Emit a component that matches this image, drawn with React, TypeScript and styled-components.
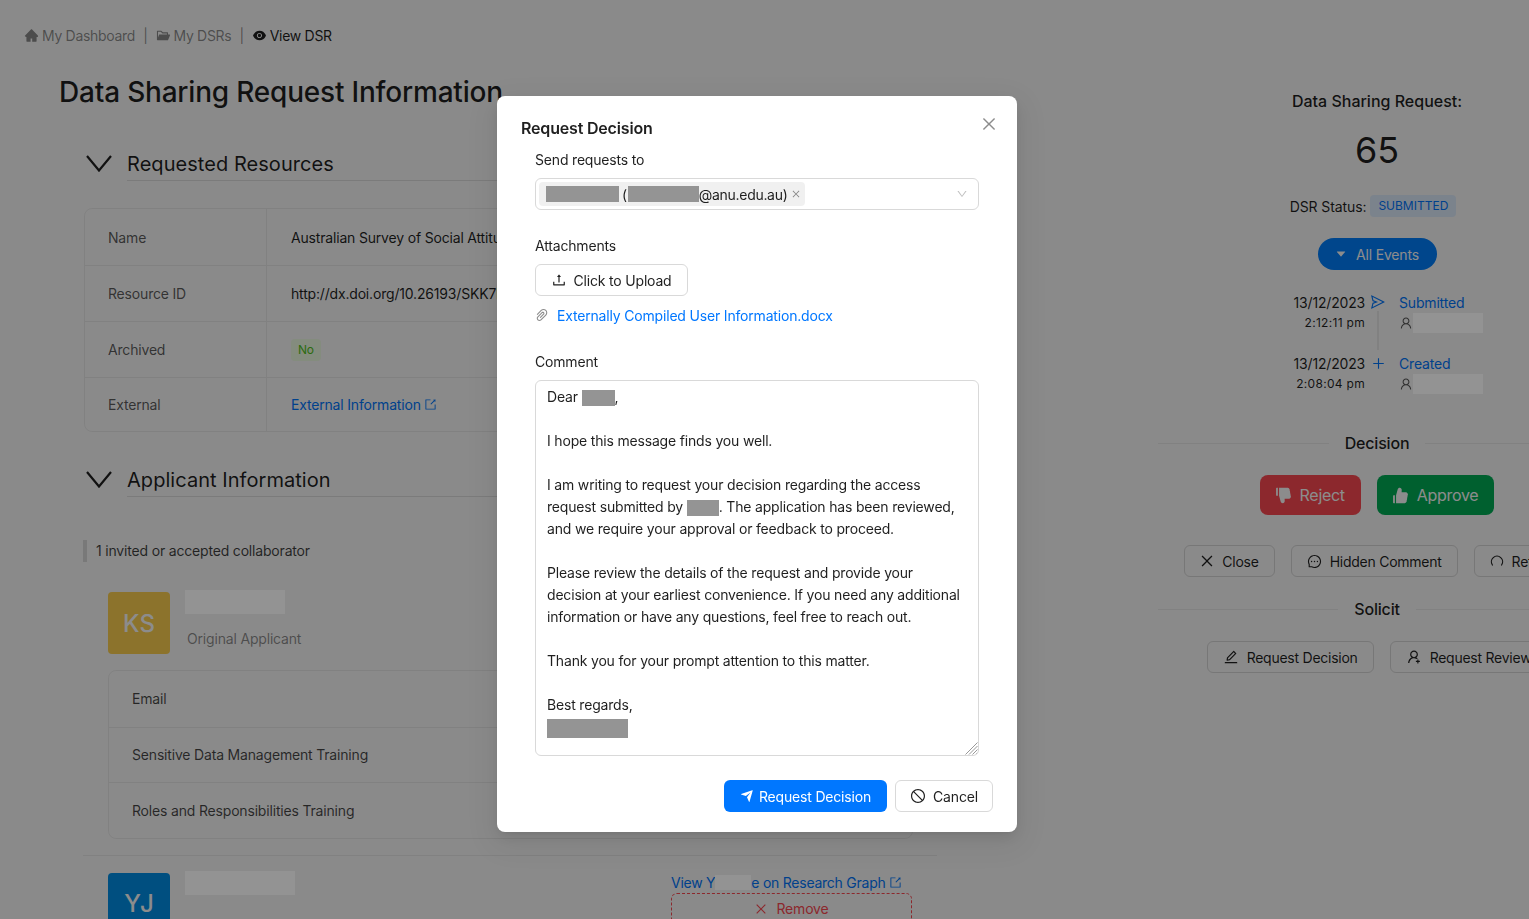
import React from 'react';
import styled, {createGlobalStyle} from 'styled-components';
import {
    AiFillCaretDown,
    AiFillDislike,
    AiFillEye,
    AiFillFolderOpen,
    AiFillHome,
    AiFillLike,
    AiOutlineClose,
    AiOutlineDown,
    AiOutlineEdit,
    AiOutlineExport,
    AiOutlineMessage,
    AiOutlinePaperClip,
    AiOutlinePlus,
    AiOutlineSend,
    AiOutlineStop,
    AiOutlineUpload,
    AiOutlineUser,
    AiOutlineUserAdd
} from 'react-icons/ai';
import {RiSendPlaneFill} from 'react-icons/ri';

const GlobalStyle = createGlobalStyle`
  html, body {
    margin: 0;
    height: 919px;
    overflow: hidden;
    background: #fbfbfb;
    font-family: Inter, "Liberation Sans", sans-serif;
    font-size: 14px;
    letter-spacing: -0.18px;
    color: rgba(0, 0, 0, 0.88);
  }
  * { box-sizing: border-box; }
`;

const resourceRows = [
    {label: 'Name', value: 'Australian Survey of Social Attitudes, 2022'},
    {label: 'Resource ID', value: 'http://dx.doi.org/10.26193/SKK7PT'},
    {label: 'Archived', tag: 'No'},
    {label: 'External', link: 'External Information'}
];

const trainingRows = ['Email', 'Sensitive Data Management Training', 'Roles and Responsibilities Training'];

const ReturnIcon = () => (
    <svg width="14" height="14" viewBox="0 0 14 14" fill="none" stroke="currentColor" strokeWidth="1.2" strokeLinecap="round">
        <path d="M2.4 11 A5.6 5.6 0 1 1 11.6 11"/>
    </svg>
);

const SectionChevron = () => (
    <ChevronSvg width="26" height="17" viewBox="0 0 26 17" fill="none" stroke="currentColor" strokeWidth="2.2">
        <polyline points="1,1 13,15.5 25,1"/>
    </ChevronSvg>
);

const ResizeGrip = () => (
    <GripSvg width="13" height="13" viewBox="0 0 13 13" stroke="#8c8c8c" strokeWidth="0.9">
        <line x1="0.5" y1="12.5" x2="12.5" y2="0.5"/>
        <line x1="4" y1="12.5" x2="12.5" y2="4"/>
        <line x1="7.5" y1="12.5" x2="12.5" y2="7.5"/>
        <line x1="10.5" y1="12.5" x2="12.5" y2="10.5"/>
    </GripSvg>
);

const App: React.FC = () => (
    <>
        <GlobalStyle/>
        <Page>
            <Breadcrumb>
                <Crumb><AiFillHome size={15}/>My Dashboard</Crumb>
                <Sep>|</Sep>
                <Crumb><AiFillFolderOpen size={15}/>My DSRs</Crumb>
                <Sep>|</Sep>
                <Crumb $current><AiFillEye size={15}/>View DSR</Crumb>
            </Breadcrumb>

            <Columns>
                <LeftColumn>
                    <PageTitle>Data Sharing Request Information</PageTitle>

                    <Section>
                        <SectionHead>
                            <SectionChevron/>
                            <SectionTitle>Requested Resources</SectionTitle>
                        </SectionHead>
                        <Table>
                            {resourceRows.map((row) => (
                                <TableRow key={row.label}>
                                    <LabelCell>{row.label}</LabelCell>
                                    <ValueCell>
                                        {row.value}
                                        {row.tag && <GreenTag>{row.tag}</GreenTag>}
                                        {row.link && <Link>{row.link} <AiOutlineExport size={13}/></Link>}
                                    </ValueCell>
                                </TableRow>
                            ))}
                        </Table>
                    </Section>

                    <Section $second>
                        <SectionHead>
                            <SectionChevron/>
                            <SectionTitle>Applicant Information</SectionTitle>
                        </SectionHead>
                        <Quote>1 invited or accepted collaborator</Quote>

                        <Person>
                            <Avatar $color="#ffd150">KS</Avatar>
                            <PersonText>
                                <NameBlock $width={100}/>
                                <Muted>Original Applicant</Muted>
                            </PersonText>
                        </Person>
                        <InnerTable>
                            {trainingRows.map((label) => (
                                <InnerRow key={label}>{label}</InnerRow>
                            ))}
                        </InnerTable>
                        <Divider/>
                        <Person $last>
                            <Avatar $color="#0091e9">YJ</Avatar>
                            <PersonText>
                                <NameBlock $width={110}/>
                            </PersonText>
                            <PersonActions>
                                <GraphLink>
                                    View Y<LinkBlock/>e on Research Graph <AiOutlineExport size={13}/>
                                </GraphLink>
                                <RemoveButton><AiOutlineClose size={14}/>Remove</RemoveButton>
                            </PersonActions>
                        </Person>
                    </Section>
                </LeftColumn>

                <RightColumn>
                    <SideTitle>Data Sharing Request:</SideTitle>
                    <BigNumber>65</BigNumber>
                    <StatusRow>DSR Status:<StatusTag>SUBMITTED</StatusTag></StatusRow>
                    <EventsButton><AiFillCaretDown size={12}/>All Events</EventsButton>

                    <Timeline>
                        <TimelineItem>
                            <TimeCell>
                                <DateText>13/12/2023</DateText>
                                <TimeText>2:12:11 pm</TimeText>
                            </TimeCell>
                            <IconCell>
                                <TimelineIcon><AiOutlineSend size={16}/></TimelineIcon>
                                <Line/>
                            </IconCell>
                            <EventCell>
                                <EventName>Submitted</EventName>
                                <EventUser><AiOutlineUser size={14}/><UserBlock/></EventUser>
                            </EventCell>
                        </TimelineItem>
                        <TimelineItem>
                            <TimeCell>
                                <DateText>13/12/2023</DateText>
                                <TimeText>2:08:04 pm</TimeText>
                            </TimeCell>
                            <IconCell>
                                <TimelineIcon><AiOutlinePlus size={15}/></TimelineIcon>
                            </IconCell>
                            <EventCell>
                                <EventName>Created</EventName>
                                <EventUser><AiOutlineUser size={14}/><UserBlock/></EventUser>
                            </EventCell>
                        </TimelineItem>
                    </Timeline>

                    <SideDivider>Decision</SideDivider>
                    <DecisionRow>
                        <BigButton $color="#ff4952"><AiFillDislike size={19}/>Reject</BigButton>
                        <BigButton $color="#00af57"><AiFillLike size={19}/>Approve</BigButton>
                    </DecisionRow>
                    <ActionRow>
                        <GhostButton><CloseGlyph size={16}/>Close</GhostButton>
                        <GhostButton><AiOutlineMessage size={15}/>Hidden Comment</GhostButton>
                        <GhostButton><ReturnIcon/>Return</GhostButton>
                    </ActionRow>
                    <SolicitDivider>Solicit</SolicitDivider>
                    <ActionRow $tight>
                        <GhostButton><AiOutlineEdit size={16}/>Request Decision</GhostButton>
                        <GhostButton><AiOutlineUserAdd size={16}/>Request Review</GhostButton>
                    </ActionRow>
                </RightColumn>
            </Columns>
        </Page>

        <Mask/>
        <Modal>
            <CloseButton><AiOutlineClose size={18}/></CloseButton>
            <ModalTitle>Request Decision</ModalTitle>
            <Form>
                <FieldLabel>Send requests to</FieldLabel>
                <SelectBox>
                    <Chip>
                        <Redact $width={73}/>
                        <ChipText>(</ChipText>
                        <Redact $width={71}/>
                        @anu.edu.au)
                        <AiOutlineClose size={10}/>
                    </Chip>
                    <AiOutlineDown size={12}/>
                </SelectBox>

                <FieldLabel $gap>Attachments</FieldLabel>
                <UploadButton><AiOutlineUpload size={16}/>Click to Upload</UploadButton>
                <AttachmentRow>
                    <AiOutlinePaperClip size={16}/>
                    <ModalLink>Externally Compiled User Information.docx</ModalLink>
                </AttachmentRow>

                <FieldLabel $gap>Comment</FieldLabel>
                <CommentBox>
                    <p>Dear <Redact $width={33}/>,</p>
                    <p>&nbsp;</p>
                    <p>I hope this message finds you well.</p>
                    <p>&nbsp;</p>
                    <p>I am writing to request your decision regarding the access</p>
                    <p>request submitted by <Redact $width={32}/>. The application has been reviewed,</p>
                    <p>and we require your approval or feedback to proceed.</p>
                    <p>&nbsp;</p>
                    <p>Please review the details of the request and provide your</p>
                    <p>decision at your earliest convenience. If you need any additional</p>
                    <p>information or have any questions, feel free to reach out.</p>
                    <p>&nbsp;</p>
                    <p>Thank you for your prompt attention to this matter.</p>
                    <p>&nbsp;</p>
                    <p>Best regards,</p>
                    <p><Redact $width={81} $tall/></p>
                    <ResizeGrip/>
                </CommentBox>
            </Form>
            <ModalFooter>
                <PrimaryButton><RiSendPlaneFill size={14}/>Request Decision</PrimaryButton>
                <CancelButton><AiOutlineStop size={16}/>Cancel</CancelButton>
            </ModalFooter>
        </Modal>
    </>
);

export default App;

// page

const Page = styled.div`
  width: 1529px;
  height: 919px;
  overflow: hidden;
  padding: 24px 0 0 24px;
`;

const Breadcrumb = styled.div`
  display: flex;
  align-items: center;
  height: 22px;
  gap: 8px;
  letter-spacing: -0.3px;
`;

const Crumb = styled.span<{$current?: boolean}>`
  display: flex;
  align-items: center;
  gap: 3px;
  color: ${(props) => (props.$current ? 'rgba(0, 0, 0, 0.88)' : 'rgba(0, 0, 0, 0.45)')};
`;

const Sep = styled.span`
  color: rgba(0, 0, 0, 0.45);
`;

const Columns = styled.div`
  display: flex;
  width: 1572px;
`;

const LeftColumn = styled.div`
  width: 913px;
  margin-right: 221px;
  flex: none;
`;

const PageTitle = styled.h1`
  margin: 27px 0 0 35px;
  font-size: 28px;
  line-height: 38px;
  font-weight: 500;
  letter-spacing: -0.2px;
`;

const Section = styled.section<{$second?: boolean}>`
  margin: ${(props) => (props.$second ? '32px' : '37px')} 0 0 60px;
`;

const SectionHead = styled.div`
  display: flex;
  align-items: flex-start;
  gap: 15px;
  margin-left: 2px;
`;

const ChevronSvg = styled.svg`
  margin-top: 7px;
  flex: none;
`;

const SectionTitle = styled.h2`
  flex: 1;
  margin: 0;
  font-size: 20px;
  line-height: 32px;
  font-weight: 400;
  letter-spacing: 0.05px;
  border-bottom: 1px solid rgba(0, 0, 0, 0.1);
`;

const Table = styled.div`
  margin-top: 27px;
  border: 1px solid rgba(0, 0, 0, 0.06);
  border-radius: 8px;
`;

const TableRow = styled.div`
  display: flex;
  height: 56px;
  & + & { border-top: 1px solid rgba(0, 0, 0, 0.06); }
  &:last-child { height: 54px; }
`;

const LabelCell = styled.div`
  width: 182px;
  padding-left: 23px;
  display: flex;
  align-items: center;
  color: rgba(0, 0, 0, 0.65);
  border-right: 1px solid rgba(0, 0, 0, 0.06);
`;

const ValueCell = styled.div`
  padding-left: 24px;
  display: flex;
  align-items: center;
`;

const GreenTag = styled.span`
  padding: 0 7px;
  height: 22px;
  line-height: 22px;
  font-size: 12px;
  border-radius: 4px;
  color: #52c41a;
  background: #f0ffe6;
`;

const Link = styled.a`
  color: #0077ff;
  display: inline-flex;
  align-items: center;
  gap: 3px;
`;

const Quote = styled.div`
  margin: 43px 0 0 -1px;
  height: 22px;
  line-height: 22px;
  padding-left: 9px;
  border-left: 4px solid rgba(0, 0, 0, 0.12);
  color: rgba(0, 0, 0, 0.75);
`;

const Person = styled.div<{$last?: boolean}>`
  display: flex;
  margin: ${(props) => (props.$last ? '17px' : '30px')} 0 0 24px;
`;

const Avatar = styled.div<{$color: string}>`
  width: 62px;
  height: 62px;
  flex: none;
  border-radius: 4px;
  background: ${(props) => props.$color};
  color: #fff;
  font-size: 24px;
  font-weight: 500;
  letter-spacing: 0;
  display: flex;
  align-items: center;
  justify-content: center;
`;

const PersonText = styled.div`
  margin: -2px 0 0 15px;
`;

const NameBlock = styled.div<{$width: number}>`
  position: relative;
  z-index: 1;
  width: ${(props) => props.$width}px;
  height: 24px;
  background: #939393;
`;

const Muted = styled.div`
  margin: 14px 0 0 2px;
  line-height: 22px;
  color: rgba(0, 0, 0, 0.45);
`;

const InnerTable = styled.div`
  margin: 16px 0 0 24px;
  width: 805px;
  border: 1px solid rgba(0, 0, 0, 0.06);
  border-radius: 8px;
`;

const InnerRow = styled.div`
  height: 55.5px;
  padding-left: 23px;
  display: flex;
  align-items: center;
  color: rgba(0, 0, 0, 0.72);
  & + & { border-top: 1px solid rgba(0, 0, 0, 0.06); }
`;

const Divider = styled.div`
  margin: 16px 0 0 -1px;
  height: 1px;
  background: rgba(0, 0, 0, 0.06);
`;

const PersonActions = styled.div`
  margin: 0 0 0 376px;
  width: 241px;
`;

const GraphLink = styled.a`
  display: flex;
  align-items: center;
  height: 20px;
  color: #0077ff;
  white-space: pre;
  letter-spacing: -0.25px;
`;

const LinkBlock = styled.span`
  position: relative;
  z-index: 1;
  width: 36px;
  height: 15px;
  background: #939393;
`;

const RemoveButton = styled.div`
  height: 32px;
  border: 1px dashed #ff4952;
  border-radius: 6px;
  color: #ff4952;
  display: flex;
  align-items: center;
  justify-content: center;
  gap: 8px;
`;

// right column

const RightColumn = styled.div`
  width: 438px;
  flex: none;
  margin-top: 43px;
  display: flex;
  flex-direction: column;
  align-items: center;
`;

const SideTitle = styled.div`
  font-size: 16px;
  font-weight: 500;
  line-height: 24px;
  letter-spacing: 0;
`;

const BigNumber = styled.div`
  margin-top: 12px;
  font-size: 36px;
  line-height: 50px;
  letter-spacing: 0;
`;

const StatusRow = styled.div`
  margin: 20px 8px 0 0;
  display: flex;
  align-items: center;
  gap: 4px;
  height: 22px;
  letter-spacing: -0.1px;
`;

const StatusTag = styled.span`
  padding: 0 8px;
  line-height: 22px;
  font-size: 12px;
  letter-spacing: 0;
  border-radius: 4px;
  color: #0077ff;
  background: #e1eeff;
`;

const EventsButton = styled.div`
  margin-top: 21px;
  width: 119px;
  height: 32px;
  border-radius: 16px;
  background: #0080ff;
  color: #fff;
  display: flex;
  align-items: center;
  justify-content: center;
  gap: 9px;
`;

const Timeline = styled.div`
  margin-top: 23px;
  width: 100%;
`;

const TimelineItem = styled.div`
  display: grid;
  grid-template-columns: 207px 26px 1fr;
  height: 61px;
  &:last-child { height: 77px; }
`;

const TimeCell = styled.div`
  text-align: right;
`;

const DateText = styled.div`
  line-height: 20px;
`;

const TimeText = styled.div`
  font-size: 12px;
  line-height: 20px;
  letter-spacing: 0.3px;
`;

const IconCell = styled.div`
  display: flex;
  flex-direction: column;
  align-items: center;
  color: #0077ff;
`;

const TimelineIcon = styled.div`
  height: 18px;
  display: flex;
  align-items: center;
`;

const Line = styled.div`
  width: 2px;
  flex: 1;
  margin-bottom: 4px;
  background: rgba(0, 0, 0, 0.06);
`;

const EventCell = styled.div`
  padding-left: 8px;
`;

const EventName = styled.div`
  line-height: 20px;
  color: #0077ff;
`;

const EventUser = styled.div`
  display: flex;
  align-items: center;
  height: 20px;
  color: rgba(0, 0, 0, 0.65);
  svg { flex: none; }
`;

const UserBlock = styled.span`
  position: relative;
  z-index: 1;
  width: 70px;
  height: 20px;
  background: #939393;
`;

const SideDivider = styled.div`
  width: 100%;
  display: flex;
  align-items: center;
  gap: 16px;
  font-size: 16px;
  font-weight: 500;
  line-height: 24px;
  &::before, &::after {
    content: '';
    flex: 1;
    height: 1px;
    background: rgba(0, 0, 0, 0.06);
  }
`;

const SolicitDivider = styled(SideDivider)`
  margin-top: 20px;
`;

const DecisionRow = styled.div`
  margin-top: 20px;
  display: flex;
  gap: 16px;
`;

const BigButton = styled.div<{$color: string}>`
  height: 40px;
  padding: 0 16px;
  border-radius: 8px;
  background: ${(props) => props.$color};
  color: #fff;
  font-size: 16px;
  letter-spacing: -0.3px;
  display: flex;
  align-items: center;
  gap: 8px;
  svg { margin: 0 -1.5px; }
`;

const ActionRow = styled.div<{$tight?: boolean}>`
  margin-top: ${(props) => (props.$tight ? '20px' : '30px')};
  display: flex;
  gap: 16px;
`;

const GhostButton = styled.div`
  height: 32px;
  padding: 0 15px;
  border: 1px solid #d9d9d9;
  border-radius: 6px;
  background: #fbfbfb;
  white-space: nowrap;
  letter-spacing: -0.25px;
  display: flex;
  align-items: center;
  gap: 8px;
`;

const CloseGlyph = styled(AiOutlineClose)`
  margin: 0 -1px;
`;

// modal

const Mask = styled.div`
  position: fixed;
  inset: 0;
  background: rgba(0, 0, 0, 0.45);
`;

const Modal = styled.div`
  position: fixed;
  z-index: 2;
  left: 497px;
  top: 96px;
  width: 520px;
  height: 736px;
  padding: 21px 24px 20px;
  border-radius: 8px;
  background: #fff;
  box-shadow: 0 6px 16px rgba(0, 0, 0, 0.08), 0 3px 6px -4px rgba(0, 0, 0, 0.12), 0 9px 28px 8px rgba(0, 0, 0, 0.05);
`;

const CloseButton = styled.div`
  position: absolute;
  top: 19px;
  right: 19px;
  display: flex;
  color: rgba(0, 0, 0, 0.45);
`;

const ModalTitle = styled.div`
  font-size: 16px;
  font-weight: 600;
  line-height: 22px;
`;

const Form = styled.div`
  margin: 10px 14px 0;
`;

const FieldLabel = styled.div<{$gap?: boolean}>`
  line-height: 22px;
  margin-top: ${(props) => (props.$gap ? '25px' : '0')};
  margin-bottom: 7px;
`;

const SelectBox = styled.div`
  height: 32px;
  border: 1px solid #d9d9d9;
  border-radius: 6px;
  padding: 0 10px 0 3px;
  display: flex;
  align-items: center;
  justify-content: space-between;
  > svg { color: rgba(0, 0, 0, 0.25); }
`;

const Chip = styled.div`
  height: 24px;
  padding: 0 4px 0 7px;
  border-radius: 4px;
  background: rgba(0, 0, 0, 0.06);
  letter-spacing: -0.3px;
  display: flex;
  align-items: center;
  svg { margin-left: 4px; color: rgba(0, 0, 0, 0.45); }
`;

const ChipText = styled.span`
  margin: 0 1px 0 3px;
`;

const Redact = styled.span<{$width: number; $tall?: boolean}>`
  display: inline-block;
  vertical-align: middle;
  width: ${(props) => props.$width}px;
  height: ${(props) => (props.$tall ? '19px' : '16px')};
  background: #949494;
`;

const UploadButton = styled.div`
  width: 153px;
  height: 32px;
  border: 1px solid #d9d9d9;
  border-radius: 6px;
  display: flex;
  align-items: center;
  justify-content: center;
  gap: 6px;
`;

const AttachmentRow = styled.div`
  margin-top: 8px;
  height: 22px;
  display: flex;
  align-items: center;
  gap: 7px;
  svg { margin-left: -1px; color: rgba(0, 0, 0, 0.45); }
`;

const ModalLink = styled.a`
  color: #0077ff;
`;

const CommentBox = styled.div`
  position: relative;
  height: 376px;
  padding: 5px 11px;
  border: 1px solid #d9d9d9;
  border-radius: 6px;
  line-height: 22px;
  overflow: hidden;
  p { margin: 0; white-space: nowrap; }
`;

const GripSvg = styled.svg`
  position: absolute;
  right: 0;
  bottom: 0;
`;

const ModalFooter = styled.div`
  margin-top: 24px;
  display: flex;
  justify-content: flex-end;
  gap: 8px;
`;

const PrimaryButton = styled.div`
  width: 163px;
  height: 32px;
  border-radius: 6px;
  background: #0077ff;
  color: #fff;
  display: flex;
  align-items: center;
  justify-content: center;
  gap: 5px;
`;

const CancelButton = styled.div`
  width: 98px;
  height: 32px;
  border: 1px solid #d9d9d9;
  border-radius: 6px;
  display: flex;
  align-items: center;
  justify-content: center;
  gap: 7px;
`;
